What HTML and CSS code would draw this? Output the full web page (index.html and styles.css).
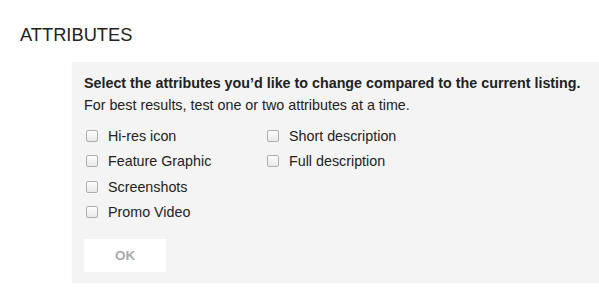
FILE: index.html
```html
<!DOCTYPE html>
<html lang="en">
<head>
    <meta charset="UTF-8">
    <meta name="viewport" content="width=device-width, initial-scale=1.0">
    <title>Attributes</title>
    <link rel="stylesheet" href="styles.css">
</head>
<body>
    <h2 class="section-title">ATTRIBUTES</h2>

    <div class="attr-panel">
        <p class="lead">Select the attributes you’d like to change compared to the current listing.</p>
        <p class="hint">For best results, test one or two attributes at a time.</p>

        <div class="attr-grid">
            <div class="attr-col">
                <label class="attr"><input type="checkbox"> Hi-res icon</label>
                <label class="attr"><input type="checkbox"> Feature Graphic</label>
                <label class="attr"><input type="checkbox"> Screenshots</label>
                <label class="attr"><input type="checkbox"> Promo Video</label>
            </div>
            <div class="attr-col">
                <label class="attr"><input type="checkbox"> Short description</label>
                <label class="attr"><input type="checkbox"> Full description</label>
            </div>
        </div>

        <button class="ok-btn" disabled>OK</button>
    </div>
</body>
</html>
```

FILE: styles.css
```css
* {
    box-sizing: border-box;
    font-family: 'Liberation Sans', Arial, sans-serif;
}

body {
    margin: 0;
    background: #fff;
    color: #222;
}

.section-title {
    margin: 0;
    padding: 24px 0 0 20px;
    font-size: 18.3px;
    font-weight: normal;
    line-height: 22px;
    color: #222;
}

.attr-panel {
    margin: 16px 0 0 72px;
    padding: 11px 12px 11px 12px;
    background: #f4f4f4;
    box-shadow: 0 1px 1px rgba(0, 0, 0, 0.05);
}

.lead {
    margin: 0;
    font-size: 14.3px;
    font-weight: bold;
    line-height: 20px;
    color: #222;
}

.hint {
    margin: 2px 0 0;
    font-size: 14.3px;
    line-height: 20px;
    color: #222;
}

.attr-grid {
    display: grid;
    grid-template-columns: 181px 1fr;
    margin-top: 8px;
}

.attr-col {
    display: flex;
    flex-direction: column;
}

.attr {
    display: flex;
    align-items: center;
    height: 25.5px;
    font-size: 14.3px;
    color: #222;
}

.attr input {
    appearance: none;
    -webkit-appearance: none;
    width: 12px;
    height: 12px;
    margin: 0 10px 0 2px;
    border: 1px solid #aeaeae;
    border-radius: 2px;
    background: linear-gradient(#fdfdfd, #e8e8e8);
}

.ok-btn {
    display: block;
    margin-top: 14px;
    width: 82px;
    height: 33px;
    border: none;
    background: #fff;
    color: #ababab;
    font-size: 13.5px;
    font-weight: bold;
}
```
